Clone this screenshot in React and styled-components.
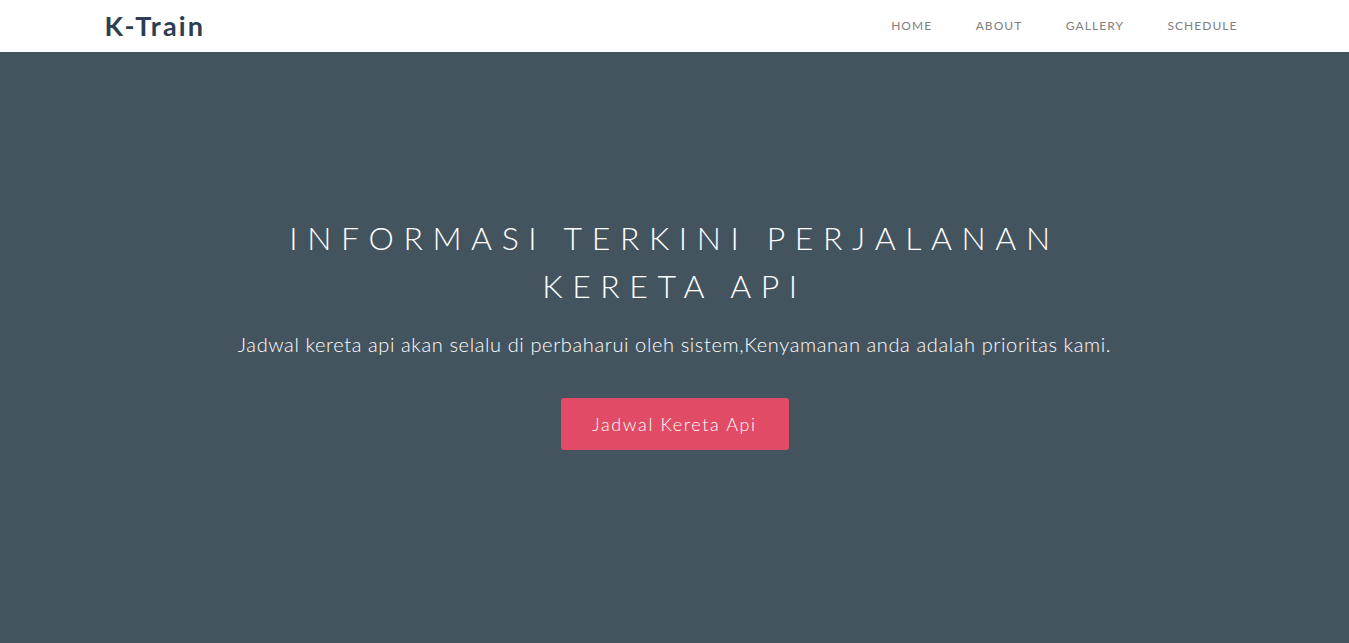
import styled, { createGlobalStyle } from 'styled-components';

const GlobalStyle = createGlobalStyle`
    html, body {
        margin: 0;
        padding: 0;
        background: #44545f;
        font-family: Lato, "Open Sans", sans-serif;
    }
`;

const Page = styled.div`
    display: flex;
    flex-direction: column;
    min-height: 100vh;
`;

const NavBar = styled.nav`
    height: 52px;
    background: #ffffff;
    display: flex;
    justify-content: center;
`;

const NavInner = styled.div`
    width: 1140px;
    display: flex;
    align-items: center;
    justify-content: space-between;
    padding-bottom: 2px;
    box-sizing: border-box;
`;

const Logo = styled.a`
    color: #2c3e50;
    font-size: 27px;
    font-weight: 700;
    letter-spacing: 2.2px;
    text-decoration: none;
`;

const NavList = styled.ul`
    display: flex;
    gap: 43.5px;
    list-style: none;
    margin: 0;
    padding: 0 7px 0 0;
`;

const NavItem = styled.li`
    font-size: 12px;
    letter-spacing: 1.05px;
    color: #808080;
    text-transform: uppercase;
`;

const Hero = styled.header`
    flex: 1;
    display: flex;
    flex-direction: column;
    align-items: center;
    padding-top: 162px;
    color: #ffffff;
    text-align: center;
`;

const Title = styled.h1`
    max-width: 860px;
    margin: 0;
    font-size: 32px;
    font-weight: 300;
    line-height: 48px;
    letter-spacing: 9.6px;
`;

const Subtitle = styled.p`
    margin: 22px 0 0;
    font-size: 20px;
    font-weight: 300;
    letter-spacing: 0.62px;
`;

const Button = styled.a`
    margin-top: 42px;
    width: 228px;
    height: 52px;
    display: flex;
    align-items: center;
    justify-content: center;
    background: #e24b65;
    border-radius: 3px;
    color: #ffffff;
    font-size: 18px;
    font-weight: 300;
    letter-spacing: 1.6px;
    text-decoration: none;
`;

const links = ['Home', 'About', 'Gallery', 'Schedule'];

const App = () => {
    return (
        <Page>
            <GlobalStyle />
            <NavBar>
                <NavInner>
                    <Logo href="#">K-Train</Logo>
                    <NavList>
                        {links.map((l) => (
                            <NavItem key={l}>{l}</NavItem>
                        ))}
                    </NavList>
                </NavInner>
            </NavBar>
            <Hero>
                <Title>INFORMASI TERKINI PERJALANAN KERETA API</Title>
                <Subtitle>
                    Jadwal kereta api akan selalu di perbaharui oleh sistem,Kenyamanan anda adalah prioritas kami.
                </Subtitle>
                <Button href="#">Jadwal Kereta Api</Button>
            </Hero>
        </Page>
    );
};

export default App;
